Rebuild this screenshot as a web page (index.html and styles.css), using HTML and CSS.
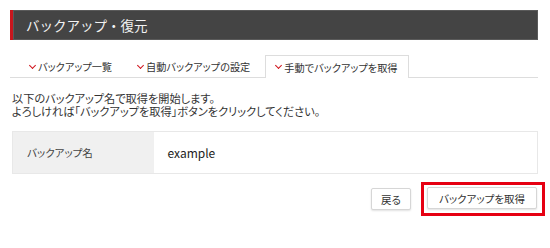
FILE: index.html
```html
<!DOCTYPE html>
<html lang="ja">
<head>
<meta charset="utf-8">
<link rel="stylesheet" href="styles.css">
</head>
<body>
<div class="page">
  <h1 class="title">バックアップ・復元</h1>
  <ul class="tabs">
    <li class="tab"><span class="chev"></span>バックアップ一覧</li>
    <li class="tab"><span class="chev"></span>自動バックアップの設定</li>
    <li class="tab active"><span class="chev"></span>手動でバックアップを取得</li>
  </ul>
  <p class="desc">以下のバックアップ名で取得を開始します。<br>よろしければ「バックアップを取得」ボタンをクリックしてください。</p>
  <table class="form">
    <tr>
      <th>バックアップ名</th>
      <td>example</td>
    </tr>
  </table>
  <div class="actions">
    <button class="btn">戻る</button>
    <span class="highlight"><button class="btn">バックアップを取得</button></span>
  </div>
</div>
</body>
</html>
```
FILE: styles.css
```css
html, body {
  margin: 0;
  padding: 0;
  background: #fff;
}
body {
  font-family: "Noto Sans CJK JP", "Noto Sans", sans-serif;
  color: #333;
  font-feature-settings: "palt";
}
.page {
  padding: 10px 12px 0 10px;
}
.title {
  margin: 0;
  height: 30px;
  box-sizing: border-box;
  background: #444;
  border-left: 3px solid #c8161d;
  box-shadow: inset 0 0 0 1px #5a5a5a;
  color: #f2f2f2;
  font-size: 13.5px;
  font-weight: normal;
  line-height: 30px;
  padding-left: 13px;
  font-feature-settings: normal;
}
.tabs {
  list-style: none;
  margin: 15px 0 0 0;
  padding: 0 0 0 9px;
  display: flex;
  gap: 4px;
  border-bottom: 1px solid #ddd;
  height: 22px;
}
.tab {
  display: flex;
  align-items: center;
  padding: 0 10px;
  height: 22px;
  font-size: 10.2px;
  color: #333;
  box-sizing: border-box;
  border: 1px solid transparent;
  border-bottom: none;
}
.tab.active {
  background: #fff;
  border-color: #ddd;
  height: 23px;
}
.chev {
  display: inline-block;
  width: 4px;
  height: 4px;
  border-right: 1.5px solid #d0141c;
  border-bottom: 1.5px solid #d0141c;
  transform: rotate(45deg);
  margin: -3px 3px 0 0;
}
.desc {
  margin: 14px 0 0 2px;
  font-size: 11.2px;
  line-height: 12.5px;
}
.form {
  margin: 14px 0 0 2px;
  width: 526px;
  border-collapse: collapse;
  border: 1px solid #e8e8e8;
}
.form th {
  width: 141px;
  height: 42px;
  box-sizing: border-box;
  background: #f0f0f0;
  text-align: left;
  font-weight: normal;
  font-size: 10.5px;
  padding: 0 0 0 14px;
  color: #444;
}
.form td {
  font-size: 12px;
  padding: 0 0 0 14px;
  color: #222;
}
.actions {
  display: flex;
  justify-content: flex-end;
  align-items: center;
  margin-top: 8px;
  gap: 10px;
}
.btn {
  font-family: inherit;
  font-feature-settings: "palt";
  font-size: 10.5px;
  color: #333;
  background: #fff;
  border: 1px solid #d6d6d6;
  border-radius: 2px;
  box-shadow: 0 1px 2px rgba(0,0,0,0.12);
  height: 22px;
  padding: 0 9px;
  cursor: pointer;
}
.highlight {
  display: inline-flex;
  border: 3px solid #e60012;
  padding: 2px 5px 4px 3px;
  margin-right: -7px;
}
.highlight .btn {
  width: 110px;
}
```
